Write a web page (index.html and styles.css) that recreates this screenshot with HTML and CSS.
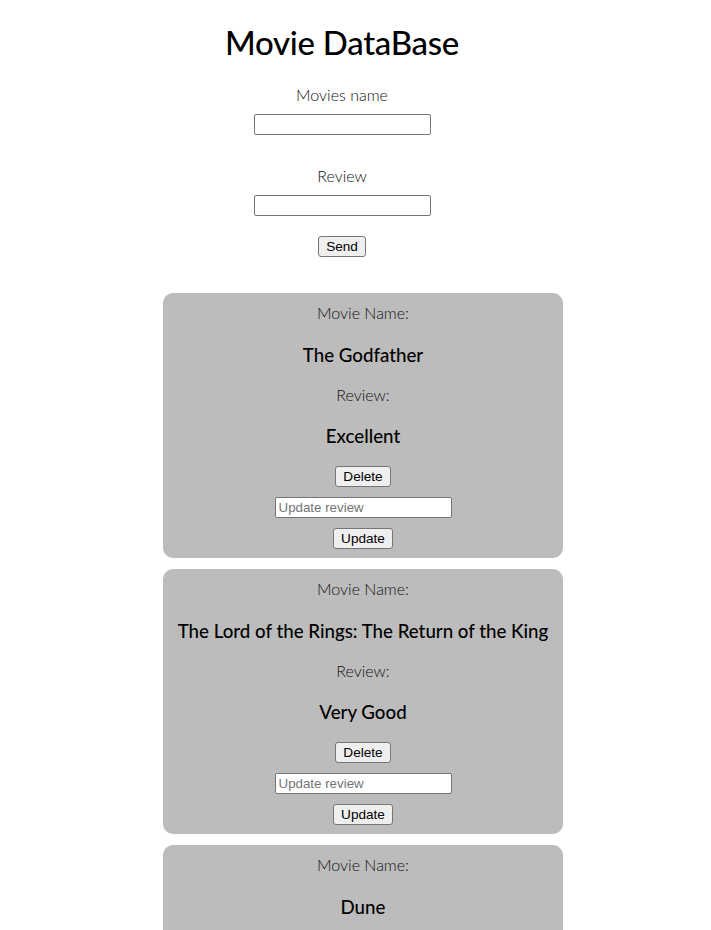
FILE: index.html
```html
<!DOCTYPE html>
<html lang="en">
<head>
<meta charset="utf-8">
<title>Movie DataBase</title>
<link rel="stylesheet" href="styles.css">
</head>
<body>
<div class="top">
  <h1 class="title">Movie DataBase</h1>
  <label class="label">Movies name</label>
  <input class="field" type="text">
  <label class="label label-second">Review</label>
  <input class="field" type="text">
  <button class="btn btn-send">Send</button>
</div>
<div class="list">
  <div class="card">
    <p class="card-label">Movie Name:</p>
    <h3 class="card-value card-name">The Godfather</h3>
    <p class="card-label">Review:</p>
    <h3 class="card-value card-review">Excellent</h3>
    <button class="btn">Delete</button>
    <input class="field update" type="text" placeholder="Update review">
    <button class="btn">Update</button>
  </div>
  <div class="card">
    <p class="card-label">Movie Name:</p>
    <h3 class="card-value card-name">The Lord of the Rings: The Return of the King</h3>
    <p class="card-label">Review:</p>
    <h3 class="card-value card-review">Very Good</h3>
    <button class="btn">Delete</button>
    <input class="field update" type="text" placeholder="Update review">
    <button class="btn">Update</button>
  </div>
  <div class="card">
    <p class="card-label">Movie Name:</p>
    <h3 class="card-value card-name">Dune</h3>
    <p class="card-label">Review:</p>
    <h3 class="card-value card-review">Good</h3>
    <button class="btn">Delete</button>
    <input class="field update" type="text" placeholder="Update review">
    <button class="btn">Update</button>
  </div>
</div>
</body>
</html>
```
FILE: styles.css
```css
html, body {
  margin: 0;
  padding: 0;
  background: #fff;
}
body {
  font-family: "Lato", "Noto Sans", sans-serif;
  color: #000;
}
.top {
  display: flex;
  flex-direction: column;
  align-items: center;
  padding-right: 27px;
  padding-top: 22px;
}
.title {
  margin: 0;
  font-size: 33px;
  font-weight: 500;
  line-height: 40px;
  letter-spacing: -0.3px;
}
.label {
  display: block;
  margin-top: 23px;
  font-size: 16px;
  font-weight: 300;
  line-height: 20px;
  color: #111;
}
.label-second {
  margin-top: 31px;
}
.field {
  box-sizing: border-box;
  width: 177px;
  height: 21px;
  margin: 0;
  margin-top: 9px;
  padding: 1px 3px;
  border: 1px solid #767676;
  border-radius: 2px;
  background: #fff;
  font-family: "Liberation Sans", Arial, sans-serif;
  font-size: 13.33px;
}
.field::placeholder {
  color: #757575;
}
.btn {
  box-sizing: border-box;
  height: 21px;
  margin: 0;
  padding: 1px 7px;
  border: 1px solid #767676;
  border-radius: 3px;
  background: #efefef;
  color: #000;
  font-family: "Liberation Sans", Arial, sans-serif;
  font-size: 13.6px;
  line-height: 15px;
}
.btn-send {
  margin-top: 20px;
}
.list {
  display: flex;
  flex-direction: column;
  align-items: center;
  gap: 11px;
  margin-top: 36px;
  padding-left: 15px;
}
.card {
  box-sizing: border-box;
  width: 400px;
  padding: 10px 0 9px;
  background: #bcbcbc;
  border-radius: 10px;
  display: flex;
  flex-direction: column;
  align-items: center;
}
.card-label {
  margin: 0;
  font-size: 16px;
  font-weight: 300;
  line-height: 20px;
  color: #111;
}
.card-value {
  margin: 20px 0 18px;
  font-size: 18.7px;
  font-weight: 500;
  line-height: 24px;
}
.card-review {
  margin-top: 19px;
}
.card .btn {
  margin-top: 0;
}
.card .update {
  margin: 10px 0;
}
```
